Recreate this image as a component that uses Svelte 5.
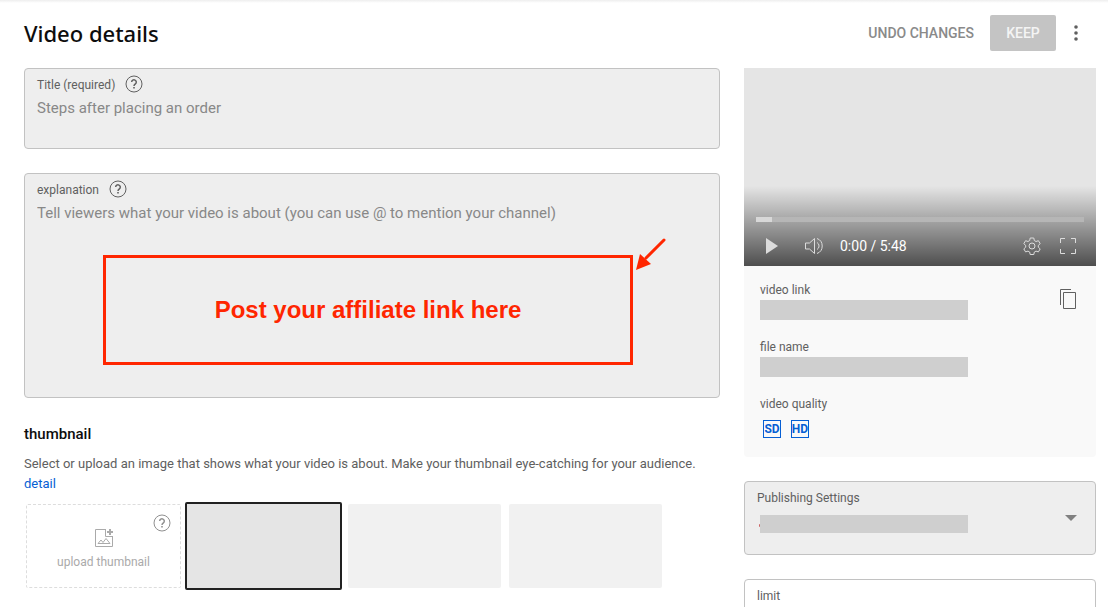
<script>
    let title = $state('');
    let description = $state('');
    let selected = $state(0);

    const stills = [0, 1, 2];
    const qualities = ['SD', 'HD'];
</script>

{#snippet helpIcon()}
    <svg width="18" height="18" viewBox="0 0 18 18" fill="none" stroke="currentColor" aria-hidden="true">
        <circle cx="9" cy="9" r="8" />
        <path d="M6.7 7.1a2.3 2.2 0 1 1 3.7 1.7C9.5 9.500 9 9.900 9 11" stroke-width="1.500" />
        <path d="M9 12v1.500" stroke-width="1.600" />
    </svg>
{/snippet}

<div class="page">
    <header>
        <h1>Video details</h1>
        <div class="actions">
            <button class="undo">UNDO CHANGES</button>
            <button class="keep">KEEP</button>
            <button class="more" aria-label="More options">
                <svg width="24" height="24" viewBox="0 0 24 24" fill="currentColor">
                    <circle cx="12" cy="6" r="1.800" />
                    <circle cx="12" cy="12" r="1.800" />
                    <circle cx="12" cy="18" r="1.800" />
                </svg>
            </button>
        </div>
    </header>

    <div class="columns">
        <main>
            <div class="field">
                <div class="field-head">
                    <label for="title">Title (required)</label>
                    <button class="help" aria-label="Title help">{@render helpIcon()}</button>
                </div>
                <textarea id="title" class="title-input" placeholder="Steps after placing an order" bind:value={title}></textarea>
            </div>

            <div class="field explanation">
                <div class="field-head">
                    <label for="description">explanation</label>
                    <button class="help" aria-label="Explanation help">{@render helpIcon()}</button>
                </div>
                <textarea
                    id="description"
                    class="description-input"
                    placeholder="Tell viewers what your video is about (you can use @ to mention your channel)"
                    bind:value={description}
                ></textarea>
                <div class="callout">Post your affiliate link here</div>
                <svg class="arrow" width="32" height="34" viewBox="0 0 32 34" aria-hidden="true">
                    <path d="M29 3 11 21" stroke="#ff2600" stroke-width="3" stroke-linecap="round" />
                    <path d="M1 33 5 17 16 27z" fill="#ff2600" />
                </svg>
            </div>

            <section class="thumbnails">
                <h2>thumbnail</h2>
                <p>
                    Select or upload an image that shows what your video is about. Make your thumbnail eye-catching for your audience.
                    <a href="#detail">detail</a>
                </p>
                <div class="thumb-row">
                    <div class="upload">
                        <button class="upload-button">
                            <svg width="20" height="20" viewBox="0 0 20 20" fill="none" stroke="currentColor" aria-hidden="true">
                                <path d="M11 1.500H1.500v17h17V9" />
                                <path d="M11.500 1v7.500H19" />
                                <path d="M16 1v6M13 4h6" stroke-width="2" />
                                <path d="M4 15.500 7 12l2 2.500 3-4 4 5z" />
                            </svg>
                            <span>upload thumbnail</span>
                        </button>
                        <button class="help corner" aria-label="Thumbnail help">{@render helpIcon()}</button>
                    </div>
                    {#each stills as i}
                        <button
                            class="still"
                            class:selected={selected === i}
                            aria-label="Still {i + 1}"
                            aria-pressed={selected === i}
                            onclick={() => (selected = i)}
                        ></button>
                    {/each}
                </div>
            </section>
        </main>

        <aside>
            <div class="card">
                <div class="player">
                    <div class="controls">
                        <div class="progress"><div class="played"></div></div>
                        <div class="control-row">
                            <button aria-label="Play">
                                <svg width="24" height="24" viewBox="0 0 24 24" fill="currentColor"><path d="M6 4v16l12-8z" /></svg>
                            </button>
                            <button class="volume" aria-label="Mute">
                                <svg width="24" height="24" viewBox="0 0 24 24" fill="none" stroke="currentColor">
                                    <path d="M3.500 9v6h4l5 4.500v-15L7.500 9z" />
                                    <path d="M15 8.500a4 4 0 0 1 0 7M15 4.500a8 8 0 0 1 0 15" />
                                </svg>
                            </button>
                            <span class="time">0:00 / 5:48</span>
                            <button aria-label="Settings">
                                <svg width="24" height="24" viewBox="0 0 24 24" fill="none" stroke="currentColor">
                                    <circle cx="12" cy="12" r="3" />
                                    <path d="M10.200 4h3.600l.5 2.500 1.700 1 2.400-.8 1.800 3-1.900 1.700v1.800l1.900 1.700-1.800 3-2.400-.8-1.700 1-.5 2.400h-3.600l-.5-2.400-1.700-1-2.400.8-1.800-3 1.900-1.700v-1.800L3.800 9.700l1.800-3 2.400.8 1.700-1z" />
                                </svg>
                            </button>
                            <button aria-label="Full screen">
                                <svg width="24" height="24" viewBox="0 0 24 24" fill="none" stroke="currentColor">
                                    <path d="M4.500 9V4.500H9M15 4.500h4.500V9M19.500 15v4.500H15M9 19.500H4.500V15" />
                                </svg>
                            </button>
                        </div>
                    </div>
                </div>
                <div class="info">
                    <div class="info-row">
                        <div>
                            <div class="caption">video link</div>
                            <div class="masked"></div>
                        </div>
                        <button class="copy" aria-label="Copy video link">
                            <svg width="24" height="24" viewBox="0 0 24 24" fill="none" stroke="currentColor">
                                <path d="M15 2.500H4.500V18" />
                                <path d="M7.500 5.500h12v16h-12z" />
                            </svg>
                        </button>
                    </div>
                    <div class="info-row">
                        <div>
                            <div class="caption">file name</div>
                            <div class="masked"></div>
                        </div>
                    </div>
                    <div class="caption">video quality</div>
                    <div class="badges">
                        {#each qualities as quality}
                            <span class="badge">{quality}</span>
                        {/each}
                    </div>
                </div>
            </div>

            <div class="select-field">
                <label for="publishing">Publishing Settings</label>
                <div class="select-wrap">
                    <select id="publishing"><option value=""></option></select>
                    <span class="dot"></span>
                    <span class="masked over"></span>
                    <svg class="caret" width="12" height="6" viewBox="0 0 12 6" aria-hidden="true"><path d="M0 0h12L6 6z" fill="#808080" /></svg>
                </div>
            </div>

            <div class="select-field plain">
                <label for="limit">limit</label>
                <div class="select-wrap">
                    <select id="limit"><option value=""></option></select>
                </div>
            </div>
        </aside>
    </div>
</div>

<style>
    :global(body) {
        overflow: hidden;
        background: #fff;
    }

    .page {
        box-sizing: border-box;
        height: 100vh;
        overflow: hidden;
        padding: 0 12px 0 24px;
        font-family: Roboto, "Liberation Sans", sans-serif;
        color: #606060;
        background: linear-gradient(#eee, #fff 3px);
    }

    .page *, .page *::before {
        box-sizing: border-box;
    }

    button {
        padding: 0;
        border: 0;
        background: none;
        font: inherit;
        color: inherit;
        cursor: pointer;
    }

    svg {
        display: block;
    }

    header {
        display: flex;
        align-items: center;
        justify-content: space-between;
        height: 66px;
        margin-bottom: 2px;
    }

    h1 {
        margin: 0;
        font-family: "Noto Sans", "Open Sans", sans-serif;
        font-size: 22px;
        font-weight: 500;
        line-height: 32px;
        color: #0d0d0d;
    }

    .actions {
        display: flex;
        align-items: center;
        height: 36px;
        font-size: 14px;
        font-weight: 500;
    }

    .undo {
        padding: 0 16px;
        color: #8a8a8a;
    }

    .keep {
        width: 66px;
        height: 36px;
        border-radius: 2px;
        background: #c4c4c4;
        color: #f4f4f4;
    }

    .more {
        display: flex;
        justify-content: center;
        width: 40px;
    }

    .columns {
        display: grid;
        grid-template-columns: minmax(0, 1fr) 352px;
        gap: 24px;
    }

    .field {
        position: relative;
        height: 81px;
        margin-bottom: 24px;
        padding: 6px 12px;
        border: 1px solid #c2c2c2;
        border-radius: 4px;
        background: #eee;
    }

    .field.explanation {
        height: 225px;
    }

    .field-head {
        display: flex;
        align-items: flex-start;
        gap: 10px;
        font-size: 12px;
        line-height: 20px;
    }

    .help {
        line-height: 18px;
        color: #606060;
    }

    textarea {
        display: block;
        width: 100%;
        margin: 1px 0 0;
        padding: 0;
        border: 0;
        outline: 0;
        resize: none;
        background: none;
        font-family: inherit;
        font-size: 15px;
        line-height: 24px;
        color: #0d0d0d;
    }

    textarea::placeholder {
        color: #888;
        opacity: 1;
    }

    .title-input {
        height: 36px;
    }

    .description-input {
        height: 180px;
    }

    .callout {
        position: absolute;
        top: 81px;
        left: 78px;
        right: 86px;
        display: flex;
        align-items: center;
        justify-content: center;
        height: 110px;
        border: 3px solid #ff2600;
        font-family: "Liberation Sans", Arial, sans-serif;
        font-size: 24px;
        font-weight: 700;
        color: #ff2600;
        pointer-events: none;
    }

    .arrow {
        position: absolute;
        top: 63px;
        right: 52px;
        pointer-events: none;
    }

    .thumbnails {
        padding-top: 2px;
    }

    h2 {
        margin: 0 0 10px;
        font-size: 15px;
        font-weight: 500;
        line-height: 20px;
        color: #0d0d0d;
    }

    p {
        margin: 0 0 8px;
        font-size: 13px;
        line-height: 20px;
    }

    a {
        display: block;
        color: #065fd4;
        text-decoration: none;
    }

    .thumb-row {
        display: flex;
        align-items: center;
        gap: 4px;
        padding-left: 2px;
    }

    .upload {
        position: relative;
        width: 155px;
        height: 84px;
        border: 1px dashed #ddd;
        border-radius: 2px;
    }

    .upload-button {
        display: flex;
        flex-direction: column;
        align-items: center;
        gap: 4px;
        width: 100%;
        height: 100%;
        padding-top: 23px;
        font-size: 12px;
        line-height: 20px;
        color: #aaa;
    }

    .corner {
        position: absolute;
        top: 9px;
        right: 9px;
        color: #909090;
    }

    .still {
        width: 157px;
        height: 88px;
        border: 2px solid transparent;
        border-radius: 4px;
        background: #f1f1f1;
        background-clip: padding-box;
    }

    .still.selected {
        border-color: #212121;
        border-radius: 2px;
        background-color: #e5e5e5;
    }

    .card {
        overflow: hidden;
        margin-bottom: 24px;
        border-radius: 0 0 4px 4px;
        background: #f9f9f9;
    }

    .player {
        display: flex;
        flex-direction: column;
        justify-content: flex-end;
        height: 198px;
        background: #e5e5e5;
    }

    .controls {
        height: 80px;
        padding: 31px 12px 0;
        background: linear-gradient(transparent, rgba(0, 0, 0, 0.66));
        color: #dcdcdc;
    }

    .progress {
        height: 5px;
        background: #b6b6b6;
    }

    .played {
        width: 16px;
        height: 100%;
        background: #d8d8d8;
    }

    .control-row {
        display: flex;
        align-items: center;
        gap: 12px;
        height: 48px;
        padding: 0 4px;
    }

    .volume {
        margin-left: 6px;
    }

    .time {
        flex: 1;
        margin-left: 2px;
        font-size: 14px;
        color: #fff;
    }

    .info {
        height: 191px;
        padding: 14px 16px;
        font-size: 12px;
    }

    .info-row {
        display: flex;
        justify-content: space-between;
        height: 57px;
    }

    .caption {
        line-height: 20px;
    }

    .masked {
        width: 208px;
        height: 20px;
        background: #cfcfcf;
    }

    .copy {
        height: 24px;
        margin-top: 7px;
    }

    .badges {
        display: flex;
        gap: 10px;
        padding: 6px 3px;
    }

    .badge {
        display: flex;
        align-items: center;
        justify-content: center;
        width: 18px;
        height: 18px;
        border: 1px solid #065fd4;
        font-family: "Liberation Sans Narrow", Roboto, sans-serif;
        font-size: 12px;
        font-weight: 700;
        line-height: 16px;
        color: #065fd4;
    }

    .select-field {
        height: 74px;
        margin-bottom: 24px;
        padding: 6px 12px;
        border: 1px solid #c2c2c2;
        border-radius: 4px;
        background: #eee;
        font-size: 12px;
    }

    .select-field.plain {
        background: #fff;
    }

    .select-field label {
        display: block;
        line-height: 20px;
    }

    .select-wrap {
        position: relative;
    }

    select {
        appearance: none;
        width: 100%;
        height: 36px;
        border: 0;
        outline: 0;
        background: none;
        font: inherit;
    }

    .over {
        position: absolute;
        top: 7px;
        left: 3px;
        height: 18px;
        pointer-events: none;
    }

    .dot {
        position: absolute;
        top: 16px;
        left: 2px;
        width: 2px;
        height: 3px;
        border-radius: 1px;
        background: #c66;
    }

    .caret {
        position: absolute;
        top: 7px;
        right: 6px;
        pointer-events: none;
    }
</style>
